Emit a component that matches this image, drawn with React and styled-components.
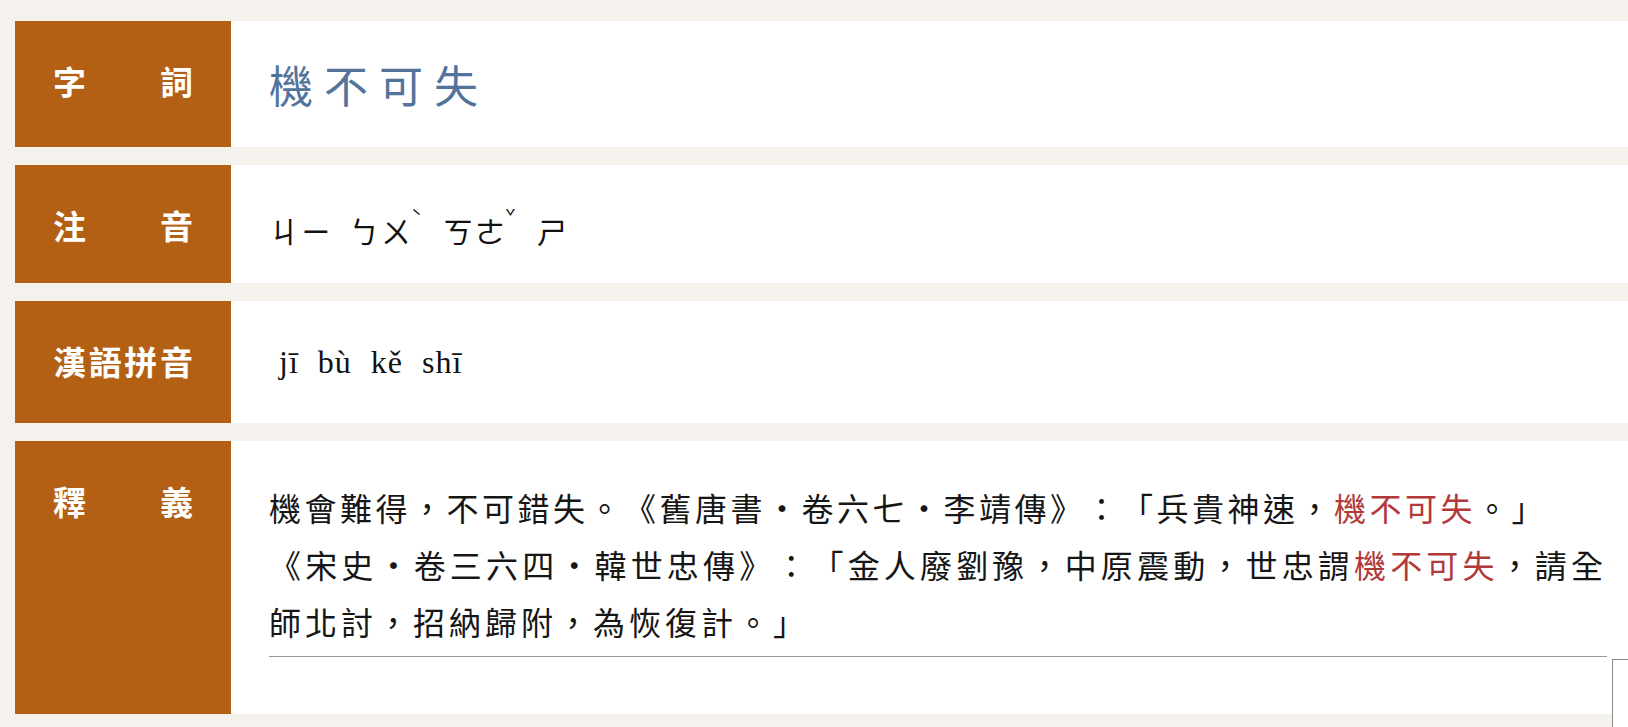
import React from "react";
import styled, { createGlobalStyle } from "styled-components";

const GlobalStyle = createGlobalStyle`
  html, body {
    margin: 0;
    padding: 0;
    background: #f5f1ec;
  }
  body {
    font-family: "Noto Sans CJK TC", "Noto Sans", sans-serif;
    color: #1a1a1a;
  }
`;

const Page = styled.main`
  display: flex;
  flex-direction: column;
  gap: 18px;
  padding: 21px 0 15px 15px;
`;

const Row = styled.section`
  display: flex;
  align-items: stretch;
`;

const Label = styled.div`
  flex: 0 0 216px;
  box-sizing: border-box;
  padding: 35px 38px 0;
  background: #b35f14;
  color: #fff;
  font-size: 33px;
  font-weight: 700;
  line-height: 50px;
  display: flex;
  justify-content: space-between;
  align-items: flex-start;
`;

const Content = styled.div`
  flex: 1;
  min-width: 0;
  background: #fff;
  display: flex;
  flex-direction: column;
  justify-content: center;
  padding: ${(p) => p.$pad || "32px 21px 32px 38px"};
`;

const Title = styled.h1`
  margin: 0;
  font-size: 44px;
  font-weight: 400;
  line-height: 62px;
  letter-spacing: 11px;
  color: #52749c;
`;

const Zhuyin = styled.div`
  display: flex;
  align-items: center;
  font-size: 30px;
  line-height: 54px;
  color: #111;
`;

const Syllable = styled.span`
  display: inline-flex;
  align-items: center;
  margin-right: ${(p) => (p.$tone ? "18px" : "16px")};
  letter-spacing: 2px;
`;

const Tone = styled.span`
  display: inline-block;
  width: 12px;
  font-size: 18px;
  line-height: 18px;
  position: relative;
  top: -14px;
  left: -2px;
`;

const Pinyin = styled.div`
  font-family: "Liberation Serif", "Times New Roman", serif;
  font-size: 32px;
  line-height: 56px;
  letter-spacing: 1px;
  word-spacing: 10px;
  color: #111;
  padding-left: 10px;
`;

const Definition = styled.div`
  font-size: 32px;
  line-height: 57px;
  font-weight: 400;
  color: #161616;
  text-spacing-trim: space-all;
`;

const Line = styled.span`
  display: block;
  white-space: nowrap;
  letter-spacing: ${(p) => p.$ls || 4}px;
  text-align: ${(p) => (p.$justify ? "justify" : "left")};
  text-align-last: ${(p) => (p.$justify ? "justify" : "auto")};
  text-justify: inter-character;
`;

const Hit = styled.span`
  color: #b2393a;
`;

const Rule = styled.hr`
  margin: 6px 0 0;
  border: 0;
  border-top: 1px solid #999;
`;

const Corner = styled.div`
  position: fixed;
  left: 1612px;
  top: 659px;
  width: 60px;
  height: 120px;
  background: #fff;
  border-left: 1px solid #8a8a8a;
  border-top: 1px solid #8a8a8a;
`;

const LabelText = ({ text }) => (
  <Label>
    {[...text].map((c, i) => (
      <span key={i}>{c}</span>
    ))}
  </Label>
);

const syllables = [
  { s: "ㄐㄧ", t: "" },
  { s: "ㄅㄨ", t: "ˋ" },
  { s: "ㄎㄜ", t: "ˇ" },
  { s: "ㄕ", t: "" },
];

export default function App() {
  return (
    <>
      <GlobalStyle />
      <Page>
        <Row>
          <LabelText text="字詞" />
          <Content $pad="32px 21px 32px 38px">
            <Title>機不可失</Title>
          </Content>
        </Row>
        <Row>
          <LabelText text="注音" />
          <Content $pad="38px 21px 26px 38px">
            <Zhuyin>
              {syllables.map((x, i) => (
                <Syllable key={i} $tone={!!x.t}>
                  {x.s}
                  {x.t && <Tone>{x.t}</Tone>}
                </Syllable>
              ))}
            </Zhuyin>
          </Content>
        </Row>
        <Row>
          <LabelText text="漢語拼音" />
          <Content $pad="33px 21px 33px 38px">
            <Pinyin>jī bù kě shī</Pinyin>
          </Content>
        </Row>
        <Row>
          <LabelText text="釋義" />
          <Content $pad="38px 21px 57px 38px">
            <Definition>
              <Line $ls={3.5}>
                機會難得，不可錯失。《舊唐書・卷六七・李靖傳》：「兵貴神速，<Hit>機不可失</Hit>。」
              </Line>
              <Line $justify>
                《宋史・卷三六四・韓世忠傳》：「金人廢劉豫，中原震動，世忠謂<Hit>機不可失</Hit>，請全
              </Line>
              <Line>師北討，招納歸附，為恢復計。」</Line>
            </Definition>
            <Rule />
          </Content>
        </Row>
      </Page>
      <Corner />
    </>
  );
}
